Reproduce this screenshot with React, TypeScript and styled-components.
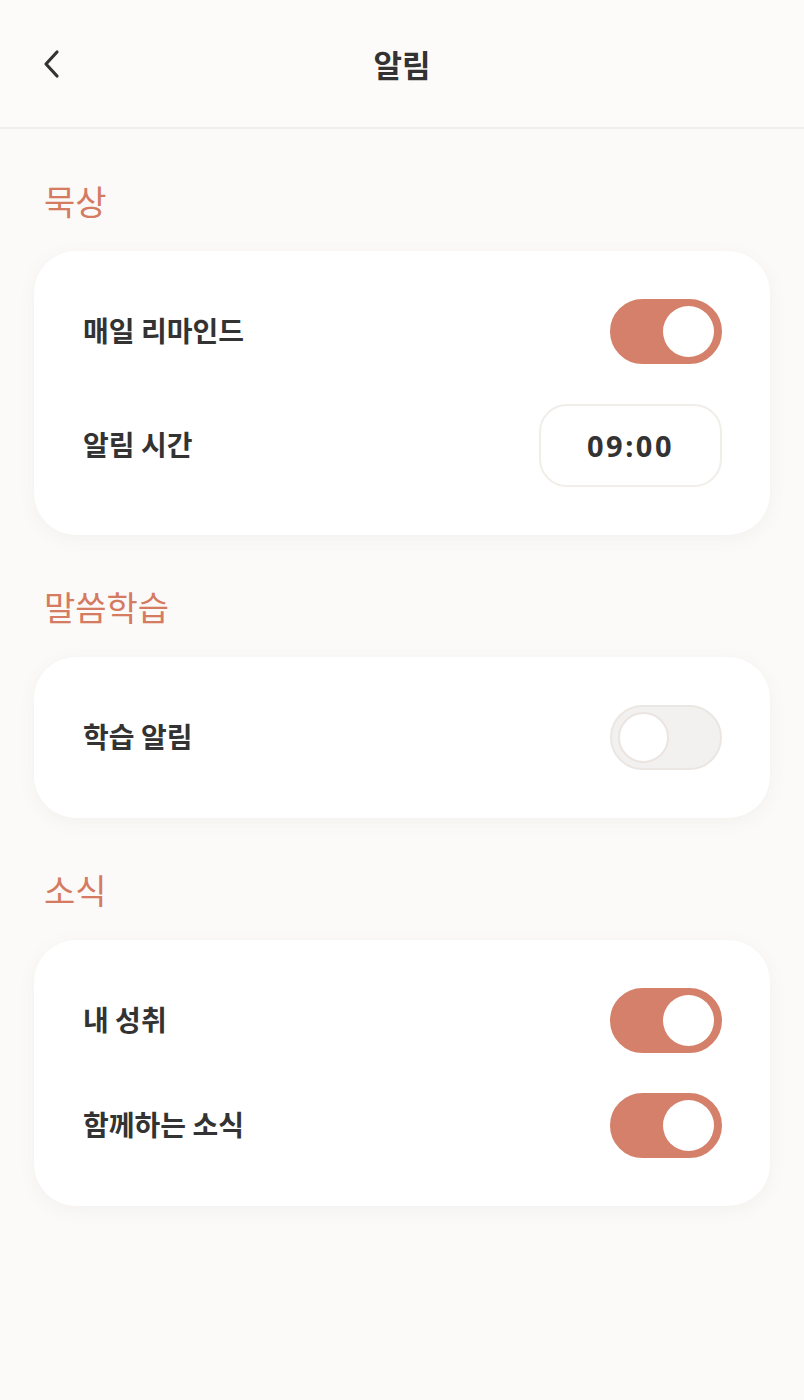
import React, { useState } from "react";
import styled, { createGlobalStyle } from "styled-components";

const GlobalStyle = createGlobalStyle`
  * { box-sizing: border-box; }
  html, body { margin: 0; padding: 0; }
  body {
    background: #fbfaf8;
    font-family: "Noto Sans CJK KR", "Noto Sans", sans-serif;
    color: #333;
  }
`;

const Page = styled.div`
  width: 804px;
  min-height: 1400px;
  background: #fbfaf8;
`;

const Header = styled.header`
  height: 129px;
  display: grid;
  grid-template-columns: 100px 1fr 100px;
  align-items: center;
  border-bottom: 2px solid #f1eeeb;
  background: #fcfbfa;
`;

const BackButton = styled.button`
  width: 60px;
  height: 60px;
  margin-left: 22px;
  padding: 0;
  border: none;
  background: none;
  display: flex;
  align-items: center;
  justify-content: center;
  cursor: pointer;
`;

const Title = styled.h1`
  margin: 0;
  text-align: center;
  font-size: 31px;
  font-weight: 700;
  color: #333;
`;

const Content = styled.main`
  padding: 0 34px;
`;

const Section = styled.section`
  padding-top: 52px;
  display: flex;
  flex-direction: column;
  gap: 30px;
`;

const SectionTitle = styled.h2`
  margin: 0;
  padding-left: 10px;
  font-size: 34px;
  line-height: 40px;
  font-weight: 400;
  color: #d47b62;
`;

const Card = styled.div`
  background: #fff;
  border-radius: 42px;
  padding: 48px 48px 48px 49px;
  display: flex;
  flex-direction: column;
  gap: 40px;
  box-shadow: 0 4px 18px rgba(120, 100, 80, 0.06);
`;

const Row = styled.div`
  display: flex;
  align-items: center;
  justify-content: space-between;
`;

const Label = styled.span`
  font-size: 28px;
  font-weight: 700;
  color: #333;
  margin-top: -3px;
`;

const TimeBox = styled.button`
  width: 183px;
  height: 83px;
  border-radius: 28px;
  border: 2px solid #f1ede9;
  background: #fff;
  font-family: "Noto Sans", sans-serif;
  font-size: 29px;
  font-weight: 700;
  letter-spacing: 2.5px;
  color: #333;
  cursor: pointer;
`;

const Track = styled.button<{ $on: boolean }>`
  width: 112px;
  height: 65px;
  border-radius: 33px;
  padding: 0 6px;
  border: 2px solid ${({ $on }) => ($on ? "#d4806a" : "#ebe6e2")};
  background: ${({ $on }) => ($on ? "#d4806a" : "#f3f1ef")};
  display: flex;
  align-items: center;
  justify-content: ${({ $on }) => ($on ? "flex-end" : "flex-start")};
  cursor: pointer;
`;

const Knob = styled.span<{ $on: boolean }>`
  width: 51px;
  height: 51px;
  border-radius: 50%;
  background: #fff;
  border: ${({ $on }) => ($on ? "none" : "2px solid #ebe4e0")};
`;

function Toggle({ on, onChange }: { on: boolean; onChange: () => void }) {
  return (
    <Track $on={on} onClick={onChange}>
      <Knob $on={on} />
    </Track>
  );
}

export default function App() {
  const [reminder, setReminder] = useState(true);
  const [study, setStudy] = useState(false);
  const [achieve, setAchieve] = useState(true);
  const [together, setTogether] = useState(true);

  return (
    <Page>
      <GlobalStyle />
      <Header>
        <BackButton aria-label="뒤로">
          <svg width="20" height="30" viewBox="0 0 20 30">
            <path
              d="M15 3 L4 15 L15 27"
              fill="none"
              stroke="#333"
              strokeWidth="3.2"
              strokeLinecap="round"
              strokeLinejoin="round"
            />
          </svg>
        </BackButton>
        <Title>알림</Title>
        <div />
      </Header>
      <Content>
        <Section>
          <SectionTitle>묵상</SectionTitle>
          <Card>
            <Row>
              <Label>매일 리마인드</Label>
              <Toggle on={reminder} onChange={() => setReminder(!reminder)} />
            </Row>
            <Row>
              <Label>알림 시간</Label>
              <TimeBox>09:00</TimeBox>
            </Row>
          </Card>
        </Section>
        <Section>
          <SectionTitle>말씀학습</SectionTitle>
          <Card>
            <Row>
              <Label>학습 알림</Label>
              <Toggle on={study} onChange={() => setStudy(!study)} />
            </Row>
          </Card>
        </Section>
        <Section>
          <SectionTitle>소식</SectionTitle>
          <Card>
            <Row>
              <Label>내 성취</Label>
              <Toggle on={achieve} onChange={() => setAchieve(!achieve)} />
            </Row>
            <Row>
              <Label>함께하는 소식</Label>
              <Toggle on={together} onChange={() => setTogether(!together)} />
            </Row>
          </Card>
        </Section>
      </Content>
    </Page>
  );
}
